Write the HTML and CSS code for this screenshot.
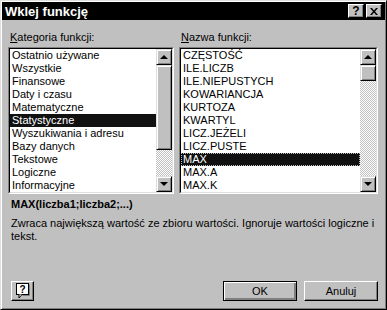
FILE: index.html
```html
<!DOCTYPE html>
<html lang="pl">
<head>
    <meta charset="UTF-8">
    <title>Wklej funkcję</title>
    <link rel="stylesheet" href="styles.css">
</head>
<body>
    <div class="dialog">
        <div class="titlebar">
            <span class="title">Wklej funkcję</span>
            <div class="caption-buttons">
                <span class="cap-btn cap-help">?</span>
                <span class="cap-btn">
                    <svg width="8" height="7" viewBox="0 0 8 7"><path d="M0 0h2l2 2.5L6 0h2L5 3.5 8 7H6L4 4.5 2 7H0l3-3.5z" fill="#000"/></svg>
                </span>
            </div>
        </div>

        <div class="content">
            <div class="columns">
                <div class="column">
                    <div class="label"><u>K</u>ategoria funkcji:</div>
                    <div class="listbox list-left">
                        <div class="listbox-inner">
                            <ul class="items">
                                <li>Ostatnio używane</li>
                                <li>Wszystkie</li>
                                <li>Finansowe</li>
                                <li>Daty i czasu</li>
                                <li>Matematyczne</li>
                                <li class="selected">Statystyczne</li>
                                <li>Wyszukiwania i adresu</li>
                                <li>Bazy danych</li>
                                <li>Tekstowe</li>
                                <li>Logiczne</li>
                                <li>Informacyjne</li>
                            </ul>
                            <div class="scrollbar">
                                <div class="sb-btn"><span class="arrow-up"></span></div>
                                <div class="thumb thumb-big"></div>
                                <div class="track"></div>
                                <div class="sb-btn"><span class="arrow-down"></span></div>
                            </div>
                        </div>
                    </div>
                </div>

                <div class="column">
                    <div class="label"><u>N</u>azwa funkcji:</div>
                    <div class="listbox list-right">
                        <div class="listbox-inner">
                            <ul class="items">
                                <li>CZĘSTOŚĆ</li>
                                <li>ILE.LICZB</li>
                                <li>ILE.NIEPUSTYCH</li>
                                <li>KOWARIANCJA</li>
                                <li>KURTOZA</li>
                                <li>KWARTYL</li>
                                <li>LICZ.JEŻELI</li>
                                <li>LICZ.PUSTE</li>
                                <li class="selected focused">MAX</li>
                                <li>MAX.A</li>
                                <li>MAX.K</li>
                            </ul>
                            <div class="scrollbar">
                                <div class="sb-btn"><span class="arrow-up"></span></div>
                                <div class="thumb"></div>
                                <div class="track"></div>
                                <div class="sb-btn"><span class="arrow-down"></span></div>
                            </div>
                        </div>
                    </div>
                </div>
            </div>

            <div class="signature">MAX(liczba1;liczba2;...)</div>
            <p class="desc">Zwraca największą wartość ze zbioru wartości. Ignoruje wartości logiczne i tekst.</p>

            <div class="footer">
                <button class="btn btn-help">
                    <svg width="14" height="16" viewBox="0 0 14 16">
                        <rect x="0.5" y="0.5" width="12" height="11" fill="#fff" stroke="#000"/>
                        <path d="M3 11.5v3.5l3-3.5" fill="#fff" stroke="#000"/>
                        <path d="M13.5 1.5v11h-7" fill="none" stroke="#808080"/>
                        <text x="6.5" y="10" text-anchor="middle" class="help-mark">?</text>
                    </svg>
                </button>
                <div class="footer-right">
                    <button class="btn btn-default">OK</button>
                    <button class="btn">Anuluj</button>
                </div>
            </div>
        </div>
    </div>
</body>
</html>
```

FILE: styles.css
```css
body {
    margin: 0;
    background-color: #c0c0c0;
    font-family: "Liberation Sans", Arial, sans-serif;
    font-size: 11px;
    color: #000;
}
.dialog {
    width: 387px;
    height: 310px;
    box-sizing: border-box;
    background-color: #c0c0c0;
    border: 1px solid;
    border-color: #dfdfdf #000 #000 #dfdfdf;
    box-shadow: inset 1px 1px #fff, inset -1px -1px #808080;
    padding: 1px;
    display: flex;
    flex-direction: column;
}
.titlebar {
    height: 18px;
    background-color: #000;
    display: flex;
    align-items: center;
    justify-content: space-between;
    padding: 0 3px 0 3px;
}
.title {
    color: #fff;
    font-weight: bold;
    font-size: 13px;
}
.caption-buttons {
    display: flex;
    gap: 2px;
}
.cap-btn {
    width: 14px;
    height: 12px;
    background-color: #c0c0c0;
    border: 1px solid;
    border-color: #fff #000 #000 #fff;
    box-shadow: inset -1px -1px #808080;
    display: flex;
    align-items: center;
    justify-content: center;
}
.cap-help {
    font-weight: bold;
    font-size: 12px;
    line-height: 12px;
}

.content {
    flex: 1;
    display: flex;
    flex-direction: column;
    padding: 11px 7px 7px 6px;
}
.columns {
    display: flex;
    gap: 5px;
}
.label {
    line-height: 13px;
    padding-left: 2px;
    margin-bottom: 3px;
}
.listbox {
    height: 147px;
    box-sizing: border-box;
    border: 1px solid;
    border-color: #808080 #fff #fff #808080;
}
.list-left {
    width: 166px;
}
.list-right {
    width: 199px;
}
.listbox-inner {
    height: 100%;
    box-sizing: border-box;
    border: 1px solid;
    border-color: #000 #dfdfdf #dfdfdf #000;
    background-color: #fff;
    display: flex;
}
.items {
    flex: 1;
    list-style: none;
    margin: 0;
    padding: 0;
    overflow: hidden;
}
.items li {
    height: 13px;
    line-height: 13px;
    padding-left: 2px;
    white-space: nowrap;
}
.items li.selected {
    background-color: #111;
    color: #fff;
}
.items li.focused {
    outline: 1px dotted #c0c0c0;
    outline-offset: -1px;
}

.scrollbar {
    width: 16px;
    display: flex;
    flex-direction: column;
}
.sb-btn, .thumb {
    height: 16px;
    box-sizing: border-box;
    background-color: #c0c0c0;
    border: 1px solid;
    border-color: #dfdfdf #000 #000 #dfdfdf;
    box-shadow: inset 1px 1px #fff, inset -1px -1px #808080;
    display: flex;
    align-items: center;
    justify-content: center;
}
.thumb-big {
    height: 85px;
}
.track {
    flex: 1;
    background: repeating-conic-gradient(#c0c0c0 0 25%, #fff 0 50%) 0 0 / 2px 2px;
}
.arrow-up {
    width: 0;
    height: 0;
    border-left: 4px solid transparent;
    border-right: 4px solid transparent;
    border-bottom: 4px solid #000;
}
.arrow-down {
    width: 0;
    height: 0;
    border-left: 4px solid transparent;
    border-right: 4px solid transparent;
    border-top: 4px solid #000;
}

.signature {
    font-weight: bold;
    line-height: 13px;
    margin-top: 4px;
    padding-left: 3px;
}
.desc {
    margin: 6px 0 0 0;
    padding-left: 3px;
    line-height: 13px;
}

.footer {
    margin-top: auto;
    display: flex;
    justify-content: space-between;
    align-items: flex-end;
    padding-left: 3px;
}
.footer-right {
    display: flex;
    gap: 7px;
}
.btn {
    height: 20px;
    width: 74px;
    box-sizing: border-box;
    font-family: "Liberation Sans", Arial, sans-serif;
    font-size: 11px;
    color: #000;
    background-color: #c0c0c0;
    border: 1px solid;
    border-color: #fff #000 #000 #fff;
    box-shadow: inset -1px -1px #808080;
    padding: 0;
}
.btn-default {
    border-color: #000;
    box-shadow: inset 1px 1px #fff, inset -2px -2px #808080;
}
.btn-help {
    width: 23px;
    display: flex;
    align-items: center;
    justify-content: center;
}
.help-mark {
    font-family: "Liberation Sans", Arial, sans-serif;
    font-weight: bold;
    font-size: 10px;
}
```
